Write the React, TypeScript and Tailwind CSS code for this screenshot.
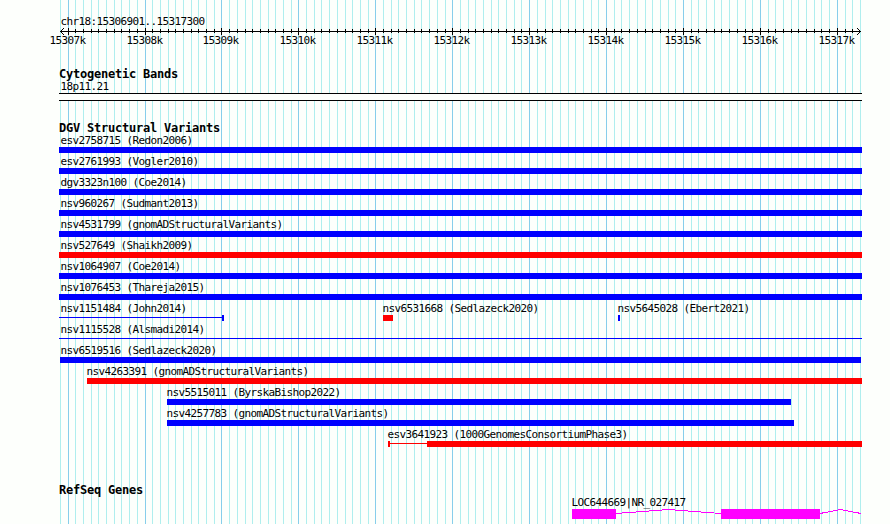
import type { FC, ReactNode } from "react";

const REGION_START = 15306901;
const REGION_END = 15317300;
const LEFT = 60;
const PX_PER_BP = 800 / 10400;

const toX = (pos: number) => Math.round(LEFT + (pos - REGION_START) * PX_PER_BP);

// One grid line / ruler tick every 100 bp
const TICKS: number[] = [];
for (let pos = 15306900; pos <= REGION_END; pos += 100) {
  TICKS.push(pos);
}

const isMajor = (pos: number) => pos % 1000 === 0;

const MAJOR_TICKS = TICKS.filter(isMajor);

type Feature = {
  label: string;
  labelX: number;
  color: "blue" | "red";
  // solid boxes and the thin line joining them, as [from, to] in pixels
  boxes: [number, number][];
  line?: [number, number];
};

const full = (label: string, color: "blue" | "red" = "blue"): Feature[] => [
  { label, labelX: 60, color, boxes: [[59, 862]] },
];

const VARIANTS: Feature[][] = [
  full("esv2758715 (Redon2006)"),
  full("esv2761993 (Vogler2010)"),
  full("dgv3323n100 (Coe2014)"),
  full("nsv960267 (Sudmant2013)"),
  full("nsv4531799 (gnomADStructuralVariants)"),
  full("nsv527649 (Shaikh2009)", "red"),
  full("nsv1064907 (Coe2014)"),
  full("nsv1076453 (Thareja2015)"),
  [
    { label: "nsv1151484 (John2014)", labelX: 60, color: "blue", boxes: [[222, 224]], line: [59, 222] },
    { label: "nsv6531668 (Sedlazeck2020)", labelX: 382, color: "red", boxes: [[383, 393]] },
    { label: "nsv5645028 (Ebert2021)", labelX: 617, color: "blue", boxes: [[618, 620]] },
  ],
  [{ label: "nsv1115528 (Alsmadi2014)", labelX: 60, color: "blue", boxes: [], line: [59, 862] }],
  [{ label: "nsv6519516 (Sedlazeck2020)", labelX: 60, color: "blue", boxes: [[60, 861]] }],
  [{ label: "nsv4263391 (gnomADStructuralVariants)", labelX: 86, color: "red", boxes: [[87, 862]] }],
  [{ label: "nsv5515011 (ByrskaBishop2022)", labelX: 166, color: "blue", boxes: [[167, 791]] }],
  [{ label: "nsv4257783 (gnomADStructuralVariants)", labelX: 166, color: "blue", boxes: [[167, 794]] }],
  [
    {
      label: "esv3641923 (1000GenomesConsortiumPhase3)",
      labelX: 387,
      color: "red",
      boxes: [[388, 390], [427, 862]],
      line: [390, 427],
    },
  ],
];

const COLORS = { blue: "#0000ff", red: "#ff0000" };

const Grid: FC = () => (
  <svg className="absolute inset-0" width="890" height="524" shapeRendering="crispEdges" aria-hidden="true">
    {TICKS.map(pos => (
      <rect key={pos} x={toX(pos)} y="0" width="1" height="524" fill={isMajor(pos) ? "#87ceeb" : "#afeeee"} />
    ))}
  </svg>
);

const Ruler: FC = () => (
  <>
    <svg className="block h-[6px] w-full overflow-visible" shapeRendering="crispEdges">
      <rect x="60" y="3" width="801" height="1" />
      {TICKS.slice(1, -1).map(pos => (
        <rect
          key={pos}
          x={toX(pos)}
          y={isMajor(pos) ? 0 : 1}
          width="1"
          height={isMajor(pos) ? 7 : 4}
        />
      ))}
      {/* Arrow heads */}
      {[1, 2, 3].map(i => (
        <g key={i}>
          <rect x={60 + i} y={3 - i} width="1" height="1" />
          <rect x={60 + i} y={3 + i} width="1" height="1" />
          <rect x={860 - i} y={3 - i} width="1" height="1" />
          <rect x={860 - i} y={3 + i} width="1" height="1" />
        </g>
      ))}
    </svg>
    <div className="flex h-[13px] pl-[49px]">
      {MAJOR_TICKS.map((pos, i) => (
        <span
          key={pos}
          className="shrink-0"
          style={{ width: i < MAJOR_TICKS.length - 1 ? toX(MAJOR_TICKS[i + 1]) - toX(pos) : 40 }}
        >
          {pos / 1000}k
        </span>
      ))}
    </div>
  </>
);

const TrackTitle: FC<{ children: ReactNode }> = ({ children }) => (
  <h2 className="h-3 pl-[59px] indent-0 text-xs leading-[13px] font-bold tracking-[-0.224px]">{children}</h2>
);

const VariantRow: FC<{ features: Feature[] }> = ({ features }) => (
  <div className="h-[21px]">
    <div className="flex h-[13px]" style={{ paddingLeft: features[0].labelX }}>
      {features.map((f, i) => (
        <span
          key={f.label}
          className="shrink-0"
          style={{ width: (features[i + 1]?.labelX ?? 862) - f.labelX }}
        >
          {f.label}
        </span>
      ))}
    </div>
    <svg className="block h-[6px] w-full" shapeRendering="crispEdges">
      {features.map(f => (
        <g key={f.label} fill={COLORS[f.color]}>
          {f.line && <rect x={f.line[0]} y="2" width={f.line[1] - f.line[0]} height="1" />}
          {f.boxes.map(([from, to]) => (
            <rect key={from} x={from} y="0" width={to - from} height="6" />
          ))}
        </g>
      ))}
    </svg>
  </div>
);

export default function App() {
  return (
    <div className="relative h-[524px] w-[890px] overflow-hidden bg-[#fdfffc] font-['DejaVu_Sans_Mono',monospace] indent-[0.5px] text-[11px] leading-[13px] tracking-[-0.622px] whitespace-nowrap text-black">
      <Grid />

      <main className="relative flex flex-col pt-[15px]">
        <div className="h-[13px] pl-[60px]">
          chr18:{REGION_START}..{REGION_END}
        </div>
        <Ruler />

        <section className="pt-[21px]">
          <TrackTitle>Cytogenetic Bands</TrackTitle>
          <div className="h-[13px] pl-[60px]">18p11.21</div>
          <div className="ml-[59px] h-2 w-[803px] border-y border-black bg-[#fdfffc]" />
        </section>

        <section className="pt-[21px]">
          <TrackTitle>DGV Structural Variants</TrackTitle>
          {VARIANTS.map(features => (
            <VariantRow key={features[0].label} features={features} />
          ))}
        </section>

        <section className="pt-[35px]">
          <TrackTitle>RefSeq Genes</TrackTitle>
          <div className="h-[13px] pl-[571px]">LOC644669|NR_027417</div>
          <svg className="block h-[15px] w-full" shapeRendering="crispEdges">
            <g fill="#ff00ff">
              <rect x="572" y="0" width="44" height="10" />
              <rect x="721" y="0" width="99" height="10" />
            </g>
            {/* Introns */}
            <g fill="none" stroke="#ff00ff">
              <path d="M616 4.5L668.5 0.5L721 4.5" />
              <path d="M820 4.5L840.5 0.5L861 4.5" />
            </g>
          </svg>
        </section>
      </main>
    </div>
  );
}
